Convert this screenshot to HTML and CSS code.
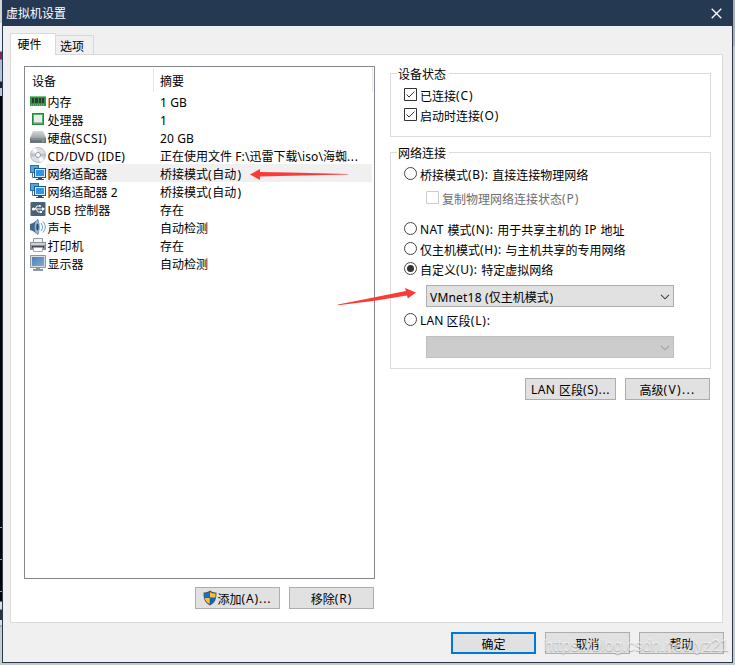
FILE: index.html
```html
<!DOCTYPE html>
<html lang="zh-CN">
<head>
<meta charset="utf-8">
<title>虚拟机设置</title>
<link rel="stylesheet" href="styles.css">
</head>
<body>
<svg class="defs" aria-hidden="true">
  <defs>
    <linearGradient id="screen" x1="0" y1="0" x2="1" y2="1"><stop offset="0" stop-color="#4b80b5"/><stop offset="1" stop-color="#7eabd6"/></linearGradient>
    <linearGradient id="metal" x1="0" y1="0" x2="0" y2="1"><stop offset="0" stop-color="#d6d8db"/><stop offset="1" stop-color="#777d84"/></linearGradient>
    <symbol id="net" viewBox="0 0 16 16">
      <path d="M0 0h9v8H0z" fill="#2d6ea8"/><path d="M1 1h7v6H1z" fill="#58a4dc"/><path d="M2.500 8v4.500H6" fill="none" stroke="#66717c"/>
      <path d="M4 3h12v10H4z" fill="#1d568c"/><path d="M5 4h10v8H5z" fill="#d5eafa"/><path d="M6 5h8v6H6z" fill="#2f97e0"/><path d="M8 13h4v1h2v1H6v-1h2z" fill="#1d568c"/>
    </symbol>
  </defs>
</svg>
<div class="dialog">
  <header class="titlebar"><span>虚拟机设置</span>
    <svg class="close" width="11" height="11" viewBox="0 0 11 11"><path d="M.7.7l9.600 9.600M10.300.7L.7 10.300" stroke="#fff" stroke-width="1.300"/></svg>
  </header>
  <nav class="tabs"><div class="tab active">硬件</div><div class="tab">选项</div></nav>
  <main class="page">
    <section class="left">
      <div class="list">
        <div class="head"><span class="c1">设备</span><span class="c2">摘要</span></div>
        <div class="row"><svg class="ico" viewBox="0 0 16 16"><path d="M0 3h16v10H0z" fill="#2f9446"/><path d="M0 3h16v1H0z" fill="#7cc489"/><path d="M2 5h2v5H2zM5 5h3v5H5zM9 5h2v5H9zM12 5h2v5h-2z" fill="#303733"/><path d="M1 12h14" stroke="#d7bd65" stroke-dasharray="1 1"/></svg><span class="c1">内存</span><span class="c2"><i>1 GB</i></span></div>
        <div class="row"><svg class="ico" viewBox="0 0 16 16"><path d="M2 2h12v12H2z" fill="#23883c"/><path d="M3 3h10v10H3z" fill="#4bb562"/><path d="M4 4h8v8H4z" fill="#e9ece9"/><path d="M4 11h8v1H4z" fill="#abb7ad"/></svg><span class="c1">处理器</span><span class="c2"><i>1</i></span></div>
        <div class="row"><svg class="ico" viewBox="0 0 16 16"><path d="M3 2h10l3 7v5H0V9z" fill="url(#metal)"/><path d="M0 9h16v5H0z" fill="#6d747c"/><path d="M1 10h14" stroke="#9ca3ab"/><path d="M12 11h2v2h-2z" fill="#52cd57"/></svg><span class="c1">硬盘<i class="p">(SCSI)</i></span><span class="c2"><i>20 GB</i></span></div>
        <div class="row"><svg class="ico" viewBox="0 0 16 16"><circle cx="8" cy="8" r="7.500" fill="#dde0e5" stroke="#a9afb7" stroke-width=".8"/><path d="M8 8L2 3a8 8 0 0 1 4-2zM8 8l6 5a8 8 0 0 1-4 2z" fill="#fff"/><path d="M8 8L1 6v4zM8 8l7-2v4z" fill="#b9c2cd"/><circle cx="8" cy="8" r="2.500" fill="#fff" stroke="#9299a2"/></svg><span class="c1"><i class="cd">CD/DVD (IDE)</i></span><span class="c2">正在使用文件<i> F:\</i>迅雷下载<i>\iso\</i>海蜘<i class="p">...</i></span></div>
        <div class="row selected"><svg class="ico"><use href="#net"/></svg><span class="c1">网络适配器</span><span class="c2">桥接模式<i class="p">(</i>自动<i class="p"> )</i></span></div>
        <div class="row"><svg class="ico"><use href="#net"/></svg><span class="c1">网络适配器<i> 2</i></span><span class="c2">桥接模式<i class="p">(</i>自动<i class="p"> )</i></span></div>
        <div class="row"><svg class="ico" viewBox="0 0 16 16"><rect x=".5" y="1" width="15" height="14" rx="1" fill="#4b6177"/><path d="M2 8h11M5 8l2-3h3M6 8l2 3h3" fill="none" stroke="#fff"/><path d="M12 6l3 2-3 2z" fill="#fff"/><circle cx="3.500" cy="8" r="1.500" fill="#fff"/><circle cx="10" cy="5" r="1" fill="#fff"/><path d="M10 10h2v2h-2z" fill="#fff"/></svg><span class="c1"><i>USB </i>控制器</span><span class="c2">存在</span></div>
        <div class="row"><svg class="ico" viewBox="0 0 16 16"><path d="M0 5l3-1 5-4c2 4 2 12 0 16l-5-4-3-1z" fill="#40678e"/><ellipse cx="7" cy="8" rx="2.300" ry="7" fill="#94b7d7"/><ellipse cx="7.500" cy="8" rx="1.200" ry="3.500" fill="#234d77"/><path d="M11 4c2 3 2 5 0 8M13 2.500c3 4 3 7 0 11" fill="none" stroke="#5d9ed6"/></svg><span class="c1">声卡</span><span class="c2">自动检测</span></div>
        <div class="row"><svg class="ico" viewBox="0 0 16 16"><path d="M3.500 1.500h9v5h-9z" fill="#f2f4f6" stroke="#92979e"/><path d="M0 5h16v8H0z" fill="#8a9099"/><path d="M1 6h14v2H1z" fill="#cdd0d5"/><path d="M2 9h12v2H2z" fill="#454b55"/><path d="M3.500 10.500h9v4h-9z" fill="#fff" stroke="#a4a9b0"/></svg><span class="c1">打印机</span><span class="c2">存在</span></div>
        <div class="row"><svg class="ico" viewBox="0 0 16 16"><path d="M.5.5h15v12H.5z" fill="#d9dee4" stroke="#8a96a3"/><path d="M2 2h12v9H2z" fill="url(#screen)"/><path d="M6 13h4v1h3v2H3v-2h3z" fill="#8a96a3"/></svg><span class="c1">显示器</span><span class="c2">自动检测</span></div>
      </div>
      <div class="buttons"><button><svg class="shield" width="16" height="16" viewBox="0 0 16 16"><path d="M8 .5c2 1.500 4 2 6.500 2 0 6-1 10-6.500 13C2.500 12.500 1.500 8.500 1.500 2.500 4 2.500 6 2 8 .5z" fill="#455360"/><path d="M7.500 2v5.500h-5L2.500 3.500C4.500 3.500 6 3 7.500 2z" fill="#1474cf"/><path d="M8 2c1.500 1 3 1.500 5.500 1.500v4H8zM2.700 8h5v6C4.500 12.300 3.200 10.500 2.700 8z" fill="#fdbd35"/><path d="M8 8h5.300c-.5 2.500-1.800 4.300-5.300 6z" fill="#0868c5"/></svg>添加<i class="w">(A)...</i></button><button>移除<i class="w">(R)</i></button></div>
    </section>
    <section class="right">
      <div class="group status"><h2>设备状态</h2>
        <label class="opt"><svg class="box" viewBox="0 0 13 13"><path d="M.5.5h12v12H.5z"/><path d="M2.500 6.500L5 9l5.500-5.500"/></svg>已连接<i class="w">(C)</i></label>
        <label class="opt"><svg class="box" viewBox="0 0 13 13"><path d="M.5.5h12v12H.5z"/><path d="M2.500 6.500L5 9l5.500-5.500"/></svg>启动时连接<i class="w">(O)</i></label>
      </div>
      <div class="group network"><h2>网络连接</h2>
        <label class="opt"><span class="radio"></span>桥接模式<i class="p">(B): </i>直接连接物理网络</label>
        <label class="opt sub"><svg class="box" viewBox="0 0 13 13"><path d="M.5.5h12v12H.5z"/></svg>复制物理网络连接状态<i class="w">(P)</i></label>
        <label class="opt"><span class="radio"></span><i class="q">NAT </i>模式<i class="p">(N): </i>用于共享主机的<i class="q"> IP </i>地址</label>
        <label class="opt"><span class="radio"></span>仅主机模式<i class="p">(H): </i>与主机共享的专用网络</label>
        <label class="opt"><span class="radio on"></span>自定义<i class="p">(U): </i>特定虚拟网络</label>
        <div class="combo"><span><i class="vm">VMnet18 (</i>仅主机模式<i> )</i></span><svg width="10" height="6" viewBox="0 0 10 6"><path d="M1 .8l4 4 4-4"/></svg></div>
        <label class="opt"><span class="radio"></span><i>LAN </i>区段<i class="w">(L):</i></label>
        <div class="combo off"><span></span><svg width="10" height="6" viewBox="0 0 10 6"><path d="M1 .8l4 4 4-4"/></svg></div>
      </div>
      <div class="buttons"><button class="wide"><i class="q">LAN </i>区段<i class="p">(S)...</i></button><button>高级<i class="v">(V)...</i></button></div>
    </section>
  </main>
  <footer class="buttons"><button class="default">确定</button><button>取消</button><button>帮助</button></footer>
</div>
<svg class="arrow a1" width="100" height="12" viewBox="0 0 100 12"><path d="M0 6.500L10 1v3l30 .5L98 6v.6L30 8l-20 .5V12z"/></svg>
<svg class="arrow a2" width="80" height="20" viewBox="0 0 80 20"><path d="M78 4.500L67 0l.8 3L28 11 0 16.500v.7L35 13l34-5.500.8 3z"/></svg>
<div class="watermark">https://blog.csdn.net/lyz21</div>
</body>
</html>
```
FILE: styles.css
```css
* { box-sizing: border-box; }
body { margin: 0; width: 735px; height: 665px; overflow: hidden; padding-left: 2px; background: linear-gradient(#aab0b3 0 46px, #c4cacc 46px 100%); font: 12px/18px "Noto Sans CJK SC", sans-serif; color: #000; position: relative; }
body::before { content: ""; position: absolute; left: 0; top: 0; width: 2px; height: 665px; background: linear-gradient(#d4d6d4 0 23px, #e9edf1 23px 51px, #7f2860 52px 59px, #aec0d8 60px 70px, #b9c6d8 70px 81px, #222 82px 88px, #b9c6d8 88px 96px, #000 96px 527px, #999 527px 528px, #000 528px 559px, #999 559px 560px, #000 560px 591px, #999 591px 592px, #000 592px 601px, #ddd 602px 609px, #333 610px 620px, #ddd 620px 625px, #aaa 625px 627px, #ccc 627px); }
i { font-style: normal; font-family: "Noto Sans", sans-serif; white-space: pre; letter-spacing: .1px; }
.p { letter-spacing: .6px; }
.q { letter-spacing: .45px; }
.w { letter-spacing: .9px; }
.v { letter-spacing: 1.3px; }
.cd, .vm { letter-spacing: .2px; }
.c2 i.p, .combo i:last-child { word-spacing: -2.500px; }
.defs { position: absolute; width: 0; height: 0; }
.dialog { width: 731px; height: 663px; background: #f0f0f0; border: solid #253a52; border-width: 0 1px 1px; }
.titlebar { height: 26px; background: #253a52; color: #fff; display: flex; align-items: center; justify-content: space-between; padding: 0 10px 0 3px; }
.tabs { display: flex; align-items: flex-end; height: 29px; margin: 0 0 -1px 7px; position: relative; }
.tab { width: 38px; height: 20px; border: 1px solid #d9d9d9; border-left: 0; padding: 1px 0 0 4px; }
.tab.active { width: 46px; height: 22px; background: #fff; border-left: 1px solid #d9d9d9; border-bottom: 0; padding: 1px 0 0 6.500px; }
.page { width: 713px; height: 569px; margin-left: 7px; background: #fff; border: 1px solid #d9d9d9; display: flex; gap: 15px; padding: 11px 0 0 13px; }
.left { width: 351px; }
.list { height: 513px; border: 1px solid #828790; }
.head { display: flex; height: 25px; padding: 1px 1px 0 0; }
.head .c1 { width: 129px; padding: 4px 0 0 7px; border-right: 1px solid #e5e5e5; }
.head .c2 { flex: 1; padding: 4px 0 0 6px; border-right: 1px solid #e5e5e5; }
.row { display: flex; height: 18px; padding-left: 5px; line-height: 19px; white-space: nowrap; }
.ico { width: 16px; height: 16px; margin-top: 1px; flex: none; }
.row .c1 { width: 114px; padding-left: 1.500px; }
.row .c2 { width: 212px; }
.selected .c1, .selected .c2 { background: #f0f0f0; }
.buttons { display: flex; justify-content: flex-end; gap: 9px; }
.left .buttons { margin: 8px 1px 0 0; }
button { width: 85px; height: 22px; border: 1px solid #adadad; background: #e1e1e1; padding: 2px 0 0; font: inherit; line-height: 18px; color: #000; display: flex; align-items: center; justify-content: center; white-space: nowrap; }
.wide { width: 91px; }
.default { border: 2px solid #0078d7; padding-top: 1px; }
.shield { margin: -3px 0 0 -2px; }
.right { width: 321px; padding-top: 7px; }
.group { border: 1px solid #dcdcdc; padding-left: 13px; }
.group h2 { font: inherit; line-height: 18px; height: 18px; width: 52px; margin: -9px 0 0 -7px; padding-left: 1px; background: #fff; }
.status { height: 64px; }
.network { height: 217px; margin-top: 15px; }
.opt { display: flex; height: 20px; line-height: 18px; white-space: nowrap; padding-top: 1px; }
.status .opt:nth-of-type(1) { margin-top: 3px; }
.box, .radio { width: 13px; height: 13px; margin: 1px 3px 0 0; flex: none; fill: none; stroke: #333; }
.radio { border: 1px solid #444; border-radius: 50%; display: flex; }
.on::after { content: ""; width: 7px; height: 7px; border-radius: 50%; background: #333; margin: 2px; }
.network .opt:nth-of-type(1) { margin-top: 3px; }
.sub { margin: 4px 0 11px 22px; color: #6d6d6d; }
.sub .box { stroke: #ccc; }
.combo { width: 248px; height: 22px; margin: 5px 0 4px 22px; padding: 2px 3px 0; border: 1px solid #adadad; background: #e1e1e1; display: flex; justify-content: space-between; }
.combo svg { margin-top: 6px; fill: none; stroke: #444; stroke-width: 1.1; }
.combo.off { background: #ccc; border-color: #bfbfbf; }
.off svg { stroke: #a0a0a0; }
.right .buttons { margin: 9px 1px 0 0; }
footer.buttons { margin: 9px 8px 0 0; }
.arrow { position: absolute; fill: #fb3b37; }
.a1 { left: 250px; top: 168px; }
.a2 { left: 338px; top: 288px; }
.watermark { position: absolute; left: 544px; top: 636px; font: 16px/20px "Liberation Sans", sans-serif; color: rgba(255,255,255,.65); text-shadow: 0 1px 1px rgba(100,100,100,.45); white-space: nowrap; }
```
